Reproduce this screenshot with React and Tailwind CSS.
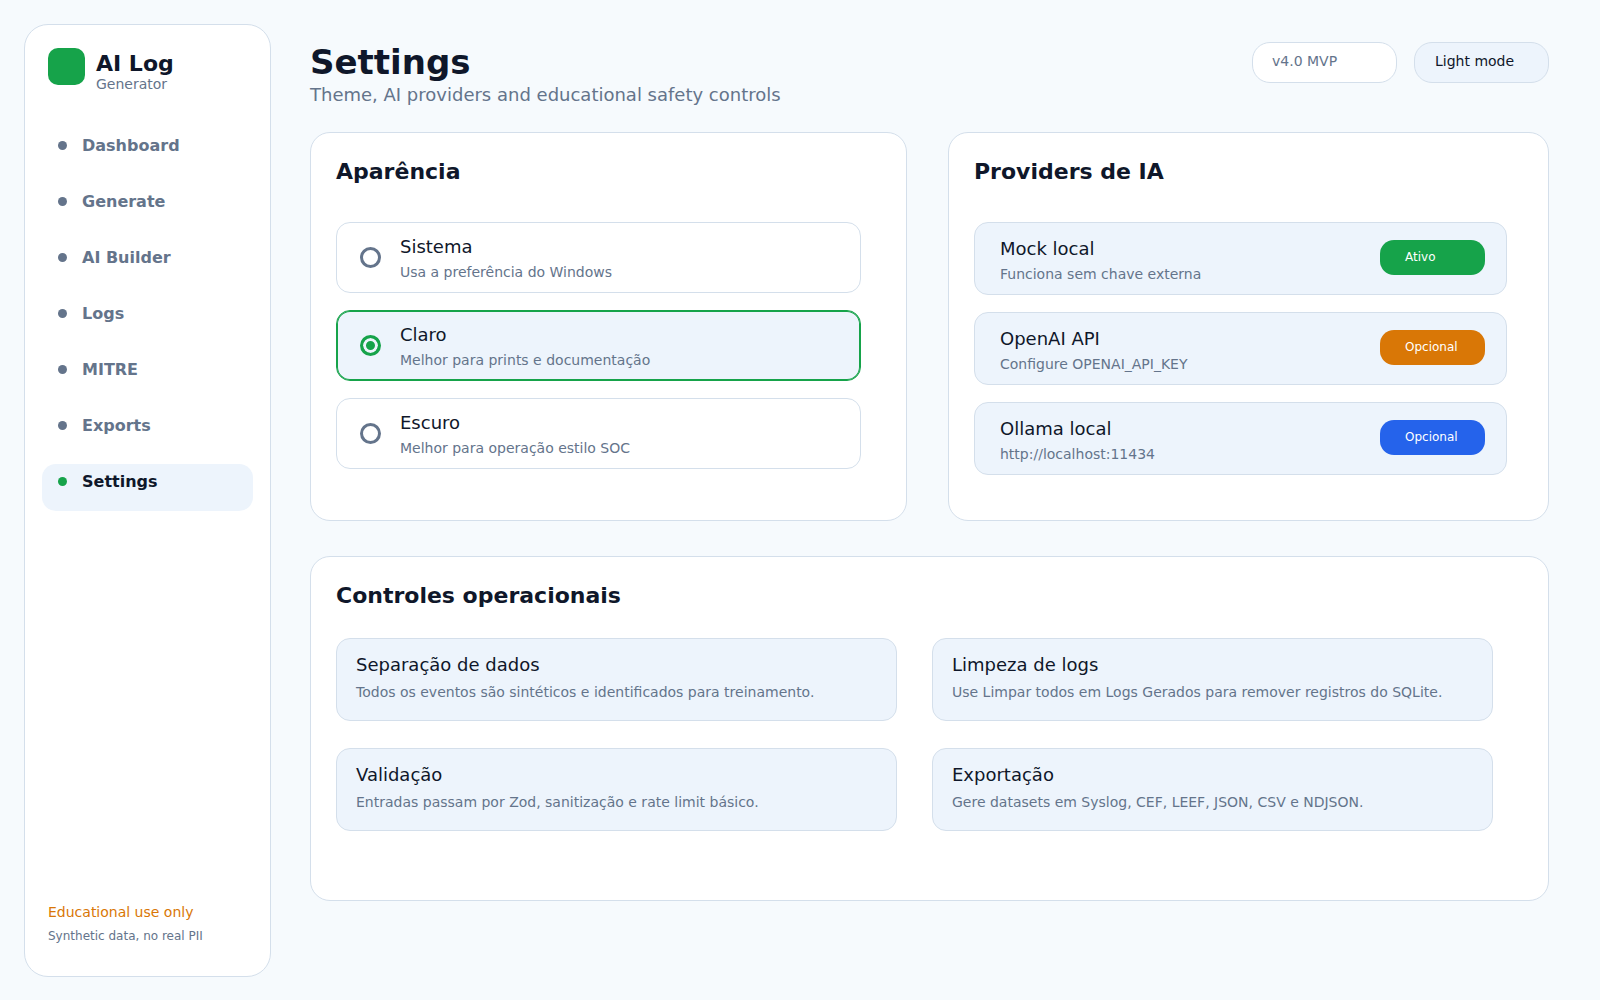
import React, { useState } from "react";
import clsx from "clsx";

const NAV_ITEMS = [
  "Dashboard",
  "Generate",
  "AI Builder",
  "Logs",
  "MITRE",
  "Exports",
  "Settings",
];

const THEMES = [
  { id: "system", title: "Sistema", description: "Usa a preferência do Windows" },
  { id: "light", title: "Claro", description: "Melhor para prints e documentação" },
  { id: "dark", title: "Escuro", description: "Melhor para operação estilo SOC" },
];

const PROVIDERS = [
  {
    title: "Mock local",
    description: "Funciona sem chave externa",
    status: "Ativo",
    color: "bg-[#16a34a]",
  },
  {
    title: "OpenAI API",
    description: "Configure OPENAI_API_KEY",
    status: "Opcional",
    color: "bg-[#d97706]",
  },
  {
    title: "Ollama local",
    description: "http://localhost:11434",
    status: "Opcional",
    color: "bg-[#2563eb]",
  },
];

const CONTROLS = [
  {
    title: "Separação de dados",
    description: "Todos os eventos são sintéticos e identificados para treinamento.",
  },
  {
    title: "Limpeza de logs",
    description: "Use Limpar todos em Logs Gerados para remover registros do SQLite.",
  },
  {
    title: "Validação",
    description: "Entradas passam por Zod, sanitização e rate limit básico.",
  },
  {
    title: "Exportação",
    description: "Gere datasets em Syslog, CEF, LEEF, JSON, CSV e NDJSON.",
  },
];

function Sidebar({ active, onSelect }) {
  return (
    <aside className="flex w-[247px] shrink-0 flex-col rounded-3xl border border-[#d4dfeb] bg-white pt-[23px] pb-8">
      {/* Brand */}
      <div className="flex gap-[11px] px-[23px]">
        <div className="size-[37px] rounded-[10px] bg-[#16a34a]" />
        <div className="pt-1">
          <p className="text-[22px] leading-6 font-bold text-[#0f172a]">AI Log</p>
          <p className="text-sm leading-4 text-[#64748b]">Generator</p>
        </div>
      </div>

      {/* Navigation */}
      <nav className="mt-9 flex flex-col gap-[9px] px-[17px]">
        {NAV_ITEMS.map((item) => (
          <a
            key={item}
            href={`#${item.toLowerCase().replace(" ", "-")}`}
            onClick={() => onSelect(item)}
            aria-current={item === active ? "page" : undefined}
            className={clsx(
              "flex h-[47px] items-start rounded-[14px] px-4 pt-2 text-base font-bold",
              item === active ? "bg-[#edf4fc] text-[#0f172a]" : "text-[#64748b]"
            )}
          >
            <span className="flex items-center gap-[15px] leading-[19px]">
              <span
                className={clsx(
                  "size-[9px] rounded-full",
                  item === active ? "bg-[#16a34a]" : "bg-[#64748b]"
                )}
              />
              {item}
            </span>
          </a>
        ))}
      </nav>

      {/* Notice */}
      <div className="mt-auto flex flex-col gap-2 px-[23px]">
        <p className="text-sm leading-4 text-[#d97706]">Educational use only</p>
        <p className="text-xs leading-4 text-[#64748b]">Synthetic data, no real PII</p>
      </div>
    </aside>
  );
}

function Card({ title, className, children }) {
  return (
    <section
      className={clsx(
        "rounded-[20px] border border-[#d4dfeb] bg-white pt-[25px] pl-[25px]",
        className
      )}
    >
      <h2 className="text-[22px] leading-7 font-bold text-[#0f172a]">{title}</h2>
      {children}
    </section>
  );
}

function ThemeOption({ theme, checked, onChange }) {
  return (
    <label
      className={clsx(
        "flex cursor-pointer items-center gap-[19px] rounded-[14px] border pl-[23px]",
        checked
          ? "border-[#16a34a] bg-[#edf4fc] ring-1 ring-[#16a34a] ring-inset"
          : "border-[#d4dfeb] bg-white"
      )}
    >
      <input
        type="radio"
        name="theme"
        value={theme.id}
        checked={checked}
        onChange={() => onChange(theme.id)}
        className="size-[21px] appearance-none rounded-full border-3 border-[#64748b] checked:border-[#16a34a] checked:bg-[#16a34a] checked:shadow-[inset_0_0_0_3px_#edf4fc]"
      />
      <span className="flex flex-col gap-2 pt-[15px] pb-3">
        <span className="text-lg leading-[18px] text-[#0f172a]">{theme.title}</span>
        <span className="text-sm leading-4 text-[#64748b]">{theme.description}</span>
      </span>
    </label>
  );
}

function ProviderRow({ provider }) {
  return (
    <li className="flex items-start justify-between rounded-[14px] border border-[#d4dfeb] bg-[#edf4fc] pt-[17px] pr-[21px] pb-3 pl-[25px]">
      <div className="flex flex-col gap-2">
        <h3 className="text-lg leading-[18px] text-[#0f172a]">{provider.title}</h3>
        <p className="text-sm leading-4 text-[#64748b]">{provider.description}</p>
      </div>
      <span
        className={clsx(
          "w-[105px] rounded-[14px] pt-[9px] pb-2.5 pl-[25px] text-xs leading-4 text-white",
          provider.color
        )}
      >
        {provider.status}
      </span>
    </li>
  );
}

export default function App() {
  const [page, setPage] = useState("Settings");
  const [theme, setTheme] = useState("light");

  return (
    <div className="flex min-h-screen bg-[#f6fafd] pt-6 pb-[23px] pl-6 font-['DejaVu_Sans',sans-serif]">
      <Sidebar active={page} onSelect={setPage} />

      <main className="min-w-0 flex-1 pt-[18px] pr-[51px] pl-[39px]">
        {/* Header */}
        <header className="flex items-start justify-between">
          <div>
            <h1 className="text-[34px] leading-10 font-bold text-[#0f172a]">Settings</h1>
            <p className="mt-0.5 text-lg leading-[22px] text-[#64748b]">
              Theme, AI providers and educational safety controls
            </p>
          </div>
          <div className="flex gap-[17px] text-sm leading-4">
            <span className="h-[41px] w-[145px] rounded-[18px] border border-[#d4dfeb] bg-white pt-2.5 pl-[19px] text-[#64748b]">
              v4.0 MVP
            </span>
            <button
              type="button"
              onClick={() => setTheme("light")}
              className="flex h-[41px] w-[135px] cursor-pointer items-start rounded-[18px] border border-[#d4dfeb] bg-[#edf4fc] pt-2.5 pl-5 text-[#0f172a]"
            >
              Light mode
            </button>
          </div>
        </header>

        <div className="mt-[26px] grid grid-cols-[597fr_601fr] gap-x-[41px] gap-y-[35px]">
          <Card title="Aparência" className="pr-[45px] pb-[51px]">
            <div role="radiogroup" aria-label="Aparência" className="mt-9 flex flex-col gap-[17px]">
              {THEMES.map((item) => (
                <ThemeOption
                  key={item.id}
                  theme={item}
                  checked={item.id === theme}
                  onChange={setTheme}
                />
              ))}
            </div>
          </Card>

          <Card title="Providers de IA" className="pr-[41px] pb-[45px]">
            <ul className="mt-9 flex flex-col gap-[17px]">
              {PROVIDERS.map((provider) => (
                <ProviderRow key={provider.title} provider={provider} />
              ))}
            </ul>
          </Card>

          <Card title="Controles operacionais" className="col-span-2 pr-[55px] pb-[69px]">
            <div className="mt-7 grid grid-cols-2 gap-x-[35px] gap-y-[27px]">
              {CONTROLS.map((control) => (
                <article
                  key={control.title}
                  className="flex flex-col gap-2.5 rounded-[14px] border border-[#d4dfeb] bg-[#edf4fc] pt-[17px] pb-5 pl-[19px]"
                >
                  <h3 className="text-lg leading-[18px] text-[#0f172a]">{control.title}</h3>
                  <p className="text-sm leading-4 text-[#64748b]">{control.description}</p>
                </article>
              ))}
            </div>
          </Card>
        </div>
      </main>
    </div>
  );
}
